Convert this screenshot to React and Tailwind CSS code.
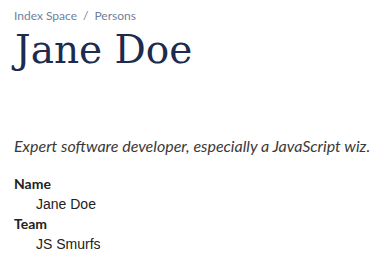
export default function App() {
  return (
    <div className="min-h-screen bg-white px-[14px] pt-[8px] font-['Lato',sans-serif]">
      <nav className="flex items-center gap-[6px] text-[12px] text-[#6f7fa0] leading-[16px]">
        <span>Index Space</span>
        <span>/</span>
        <span>Persons</span>
      </nav>

      <h1 className="text-[39px] leading-[48px] mt-[2px] pl-[1px] text-[#1c2b4f] font-['DejaVu_Serif',serif]">
        Jane Doe
      </h1>

      <p className="mt-[62px] italic text-[16px] leading-[20px] text-[#3a3a3a] whitespace-nowrap">
        Expert software developer, especially a JavaScript wiz.
      </p>

      <dl className="mt-[18px] text-[14px] leading-[20px] text-[#222]">
        <dt className="font-bold">Name</dt>
        <dd className="pl-[22px] font-['Liberation_Sans',sans-serif]">Jane Doe</dd>
        <dt className="font-bold">Team</dt>
        <dd className="pl-[22px] font-['Liberation_Sans',sans-serif]">JS Smurfs</dd>
      </dl>
    </div>
  );
}
